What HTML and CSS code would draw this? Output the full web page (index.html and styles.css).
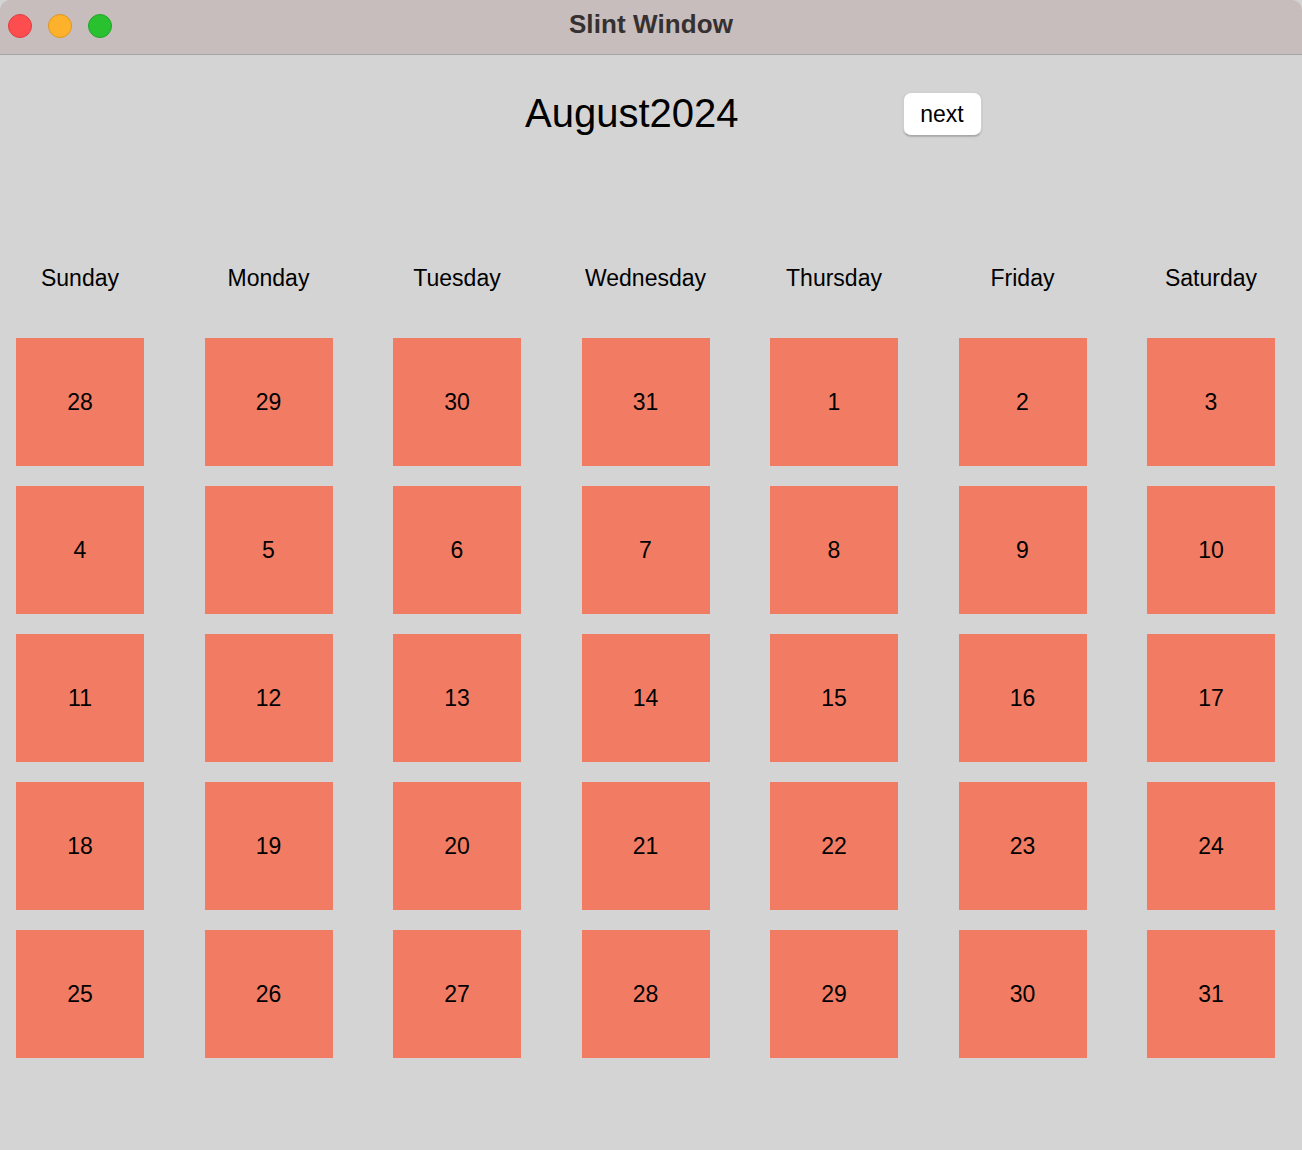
FILE: index.html
```html
<!DOCTYPE html>
<html>
<head>
<meta charset="utf-8">
<title>Slint Window</title>
<link rel="stylesheet" href="styles.css">
</head>
<body>
<div class="window">
  <div class="titlebar">
    <div class="lights">
      <span class="light red"></span>
      <span class="light yellow"></span>
      <span class="light green"></span>
    </div>
    <div class="wintitle">Slint Window</div>
  </div>
  <div class="content">
    <div class="header">
      <div class="month">August2024</div>
      <button class="next">next</button>
    </div>
    <div class="grid days">
      <div class="day">Sunday</div>
      <div class="day">Monday</div>
      <div class="day">Tuesday</div>
      <div class="day">Wednesday</div>
      <div class="day">Thursday</div>
      <div class="day">Friday</div>
      <div class="day">Saturday</div>
    </div>
    <div class="grid cells">
      <div class="cell">28</div><div class="cell">29</div><div class="cell">30</div><div class="cell">31</div><div class="cell">1</div><div class="cell">2</div><div class="cell">3</div>
      <div class="cell">4</div><div class="cell">5</div><div class="cell">6</div><div class="cell">7</div><div class="cell">8</div><div class="cell">9</div><div class="cell">10</div>
      <div class="cell">11</div><div class="cell">12</div><div class="cell">13</div><div class="cell">14</div><div class="cell">15</div><div class="cell">16</div><div class="cell">17</div>
      <div class="cell">18</div><div class="cell">19</div><div class="cell">20</div><div class="cell">21</div><div class="cell">22</div><div class="cell">23</div><div class="cell">24</div>
      <div class="cell">25</div><div class="cell">26</div><div class="cell">27</div><div class="cell">28</div><div class="cell">29</div><div class="cell">30</div><div class="cell">31</div>
    </div>
  </div>
</div>
</body>
</html>
```
FILE: styles.css
```css
html, body {
  margin: 0;
  padding: 0;
  background: #d4d4d4;
}
.window {
  width: 1302px;
  height: 1150px;
  display: flex;
  flex-direction: column;
  font-family: "Liberation Sans", Arial, sans-serif;
  color: #000;
  overflow: hidden;
}
.titlebar {
  position: relative;
  height: 54px;
  flex: none;
  background: #c7bdbc;
  border-bottom: 1px solid #aaa5a5;
  border-radius: 10px 10px 0 0;
  display: flex;
  align-items: center;
  justify-content: center;
}
.lights {
  position: absolute;
  left: 8px;
  top: 14px;
  display: flex;
  gap: 16px;
}
.light {
  width: 24px;
  height: 24px;
  border-radius: 50%;
  box-sizing: border-box;
}
.red { background: #fe4d4f; border: 1px solid #df3d3f; }
.yellow { background: #feb12a; border: 1px solid #df9620; }
.green { background: #2ac131; border: 1px solid #1fa527; }
.wintitle {
  font-weight: bold;
  font-size: 26px;
  color: #363030;
  letter-spacing: 0.1px;
  margin-top: -5px;
}
.content {
  flex: 1;
  background: #d4d4d4;
  display: flex;
  flex-direction: column;
}
.header {
  display: flex;
  align-items: center;
  height: 44px;
  margin-top: 37px;
  padding-left: 525px;
}
.month {
  font-size: 40px;
  line-height: 44px;
  margin-top: -2px;
}
.next {
  margin-left: 164px;
  width: 79px;
  height: 44px;
  box-sizing: border-box;
  background: #fff;
  border: 1px solid #cfcfcf;
  border-bottom-color: #a9a9a9;
  border-radius: 8px;
  box-shadow: 0 1px 1.5px rgba(0,0,0,0.18);
  font-family: "Liberation Sans", Arial, sans-serif;
  font-size: 23px;
  color: #000;
  padding: 0;
}
.grid {
  display: grid;
  grid-template-columns: repeat(7, 128px);
  column-gap: 60.5px;
  padding-left: 16px;
}
.days {
  margin-top: 128px;
}
.day {
  font-size: 23px;
  line-height: 28px;
  text-align: center;
  white-space: nowrap;
  display: flex;
  justify-content: center;
}
.cells {
  margin-top: 46px;
  row-gap: 20px;
}
.cell {
  height: 128px;
  background: #f27c63;
  display: flex;
  align-items: center;
  justify-content: center;
  font-size: 23px;
}
```
